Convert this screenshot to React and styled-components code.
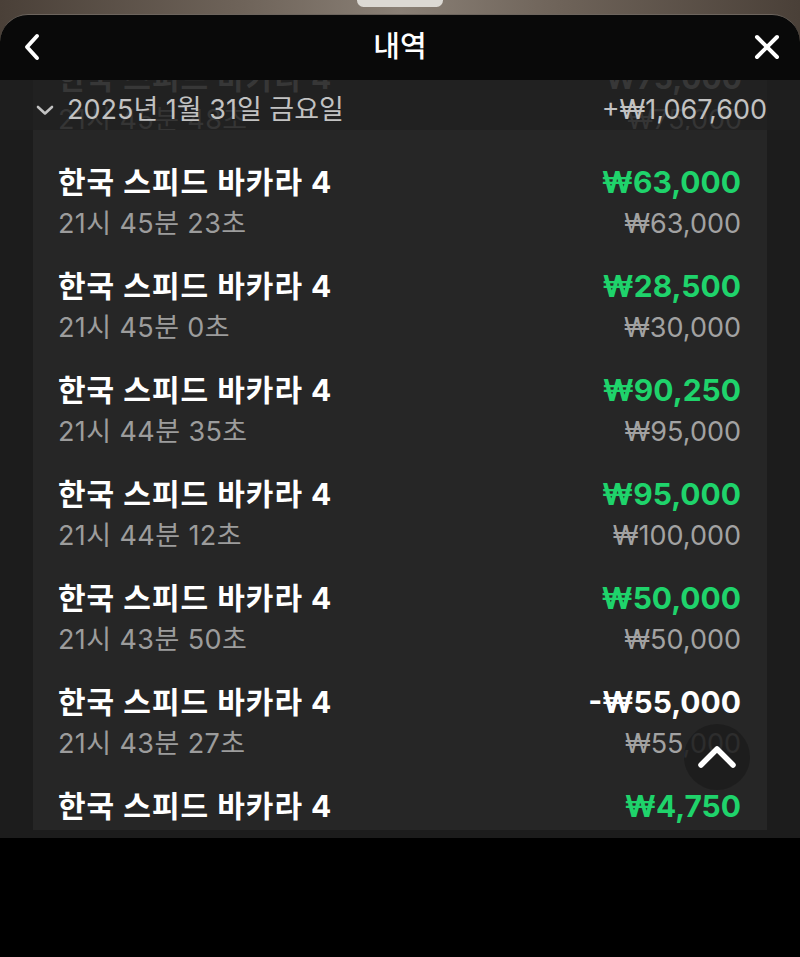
import React from "react";
import styled, { createGlobalStyle } from "styled-components";

const Global = createGlobalStyle`
  html, body { margin: 0; padding: 0; background: #000; }
  body { font-family: "Inter", "Noto Sans CJK KR", sans-serif; }
  * { box-sizing: border-box; }
`;

const Screen = styled.div`
  width: 800px;
  height: 957px;
  display: flex;
  flex-direction: column;
  background: #000;
  overflow: hidden;
`;

const Backdrop = styled.div`
  height: 80px;
  display: flex;
  flex-direction: column;
  position: relative;
  background: linear-gradient(90deg, #4a4038 0%, #6e6359 30%, #8a8076 50%, #6e6359 70%, #4a4038 100%);
`;

const Handle = styled.div`
  position: absolute;
  top: -6px;
  left: 357px;
  width: 86px;
  height: 13px;
  border-radius: 7px;
  background: #dcd9d4;
`;

const Sheet = styled.div`
  margin-top: 14px;
  flex: 1;
  background: #090909;
  border-radius: 28px 28px 0 0;
  border-top: 1px solid #6d655e;
  display: grid;
  grid-template-columns: 66px 1fr 66px;
  align-items: center;
  padding-bottom: 2px;
`;

const IconButton = styled.button`
  background: none;
  border: 0;
  padding: 0;
  width: 66px;
  height: 50px;
  display: flex;
  align-items: center;
  justify-content: center;
  color: #fff;
`;

const Title = styled.h1`
  margin: 0;
  text-align: center;
  color: #fff;
  font-size: 29px;
  font-weight: 500;
  line-height: 40px;
`;

const Main = styled.div`
  height: 758px;
  background: #1c1c1c;
  display: flex;
  flex-direction: column;
  padding-bottom: 8px;
`;

const Viewport = styled.div`
  flex: 1;
  position: relative;
  overflow: hidden;
  display: flex;
  flex-direction: column;
`;

const DateHeader = styled.div`
  height: 50px;
  position: relative;
  overflow: hidden;
  background: #1e1e1e;
  flex-shrink: 0;
`;

const GhostRow = styled.div`
  position: absolute;
  left: 33px;
  right: 33px;
  top: -28px;
  height: 120px;
  padding: 8px 25px 0;
  background: #232323;
`;

const DateBar = styled.div`
  position: relative;
  height: 100%;
  display: flex;
  align-items: center;
  padding: 10px 33px 0 36px;
  color: #c2c2c2;
  font-size: 27px;
  line-height: 36px;
  background: rgba(30, 30, 30, 0.45);
`;

const DateLabel = styled.span`
  margin-left: 13px;
  flex: 1;
`;

const Card = styled.div`
  margin: 0 33px;
  background: #262626;
  padding-top: 26px;
  flex: 1;
`;

const Row = styled.div`
  padding: ${(p) => (p.$ghost ? "0" : "8px 26px 18px 25px")};
  display: grid;
  grid-template-columns: 1fr auto;
  row-gap: 6px;
`;

const Name = styled.div`
  font-size: 30px;
  font-weight: 700;
  letter-spacing: 1px;
  line-height: 36px;
  color: ${(p) => (p.$ghost ? "#4c4c4c" : "#fff")};
`;

const Amount = styled.div`
  text-align: right;
  font-size: 30px;
  font-weight: 700;
  line-height: 36px;
  color: ${(p) => (p.$ghost ? "#4c4c4c" : p.$loss ? "#ffffff" : "#1fd36b")};
`;

const Time = styled.div`
  font-size: 27px;
  letter-spacing: 0.4px;
  line-height: 36px;
  color: ${(p) => (p.$ghost ? "#474747" : "#9c9c9c")};
`;

const Stake = styled.div`
  text-align: right;
  font-size: 27px;
  line-height: 36px;
  color: ${(p) => (p.$ghost ? "#474747" : "#a2a2a2")};
`;

const TopButton = styled.button`
  position: absolute;
  right: 50px;
  bottom: 40px;
  width: 66px;
  height: 66px;
  border-radius: 50%;
  border: 0;
  background: rgba(28, 28, 28, 0.88);
  display: flex;
  align-items: center;
  justify-content: center;
  padding: 0;
`;

const Footer = styled.div`
  flex: 1;
  background: #000;
`;

const Back = () => (
  <svg width="20" height="28" viewBox="0 0 20 28" fill="none">
    <path d="M14 3 L4 14 L14 25" stroke="#fff" strokeWidth="4" strokeLinecap="round" strokeLinejoin="round" />
  </svg>
);

const Close = () => (
  <svg width="26" height="26" viewBox="0 0 26 26" fill="none">
    <path d="M3 3 L23 23 M23 3 L3 23" stroke="#fff" strokeWidth="4" strokeLinecap="round" />
  </svg>
);

const ChevronDown = () => (
  <svg width="18" height="12" viewBox="0 0 18 12" fill="none">
    <path d="M2 3 L9 9.5 L16 3" stroke="#c2c2c2" strokeWidth="2.6" strokeLinecap="round" strokeLinejoin="round" />
  </svg>
);

const ChevronUp = () => (
  <svg width="40" height="24" viewBox="0 0 40 24" fill="none">
    <path d="M4 20 L20 4 L36 20" stroke="#fff" strokeWidth="5.5" strokeLinecap="round" strokeLinejoin="round" />
  </svg>
);

const rows = [
  { time: "21시 45분 23초", win: "₩63,000", bet: "₩63,000" },
  { time: "21시 45분 0초", win: "₩28,500", bet: "₩30,000" },
  { time: "21시 44분 35초", win: "₩90,250", bet: "₩95,000" },
  { time: "21시 44분 12초", win: "₩95,000", bet: "₩100,000" },
  { time: "21시 43분 50초", win: "₩50,000", bet: "₩50,000" },
  { time: "21시 43분 27초", win: "-₩55,000", bet: "₩55,000", loss: true },
  { time: "21시 43분 4초", win: "₩4,750", bet: "₩5,000" },
];

export default function App() {
  return (
    <Screen>
      <Global />
      <Backdrop>
        <Handle />
        <Sheet>
          <IconButton aria-label="back"><Back /></IconButton>
          <Title>내역</Title>
          <IconButton aria-label="close"><Close /></IconButton>
        </Sheet>
      </Backdrop>
      <Main>
        <Viewport>
          <DateHeader>
            <GhostRow>
              <Row $ghost>
                <Name $ghost>한국 스피드 바카라 4</Name>
                <Amount $ghost>₩75,000</Amount>
                <Time $ghost>21시 45분 48초</Time>
                <Stake $ghost>₩75,000</Stake>
              </Row>
            </GhostRow>
            <DateBar>
              <ChevronDown />
              <DateLabel>2025년 1월 31일 금요일</DateLabel>
              <span>+₩1,067,600</span>
            </DateBar>
          </DateHeader>
          <Card>
            {rows.map((r, i) => (
              <Row key={i}>
                <Name>한국 스피드 바카라 4</Name>
                <Amount $loss={r.loss}>{r.win}</Amount>
                <Time>{r.time}</Time>
                <Stake>{r.bet}</Stake>
              </Row>
            ))}
          </Card>
          <TopButton aria-label="scroll to top"><ChevronUp /></TopButton>
        </Viewport>
      </Main>
      <Footer />
    </Screen>
  );
}
